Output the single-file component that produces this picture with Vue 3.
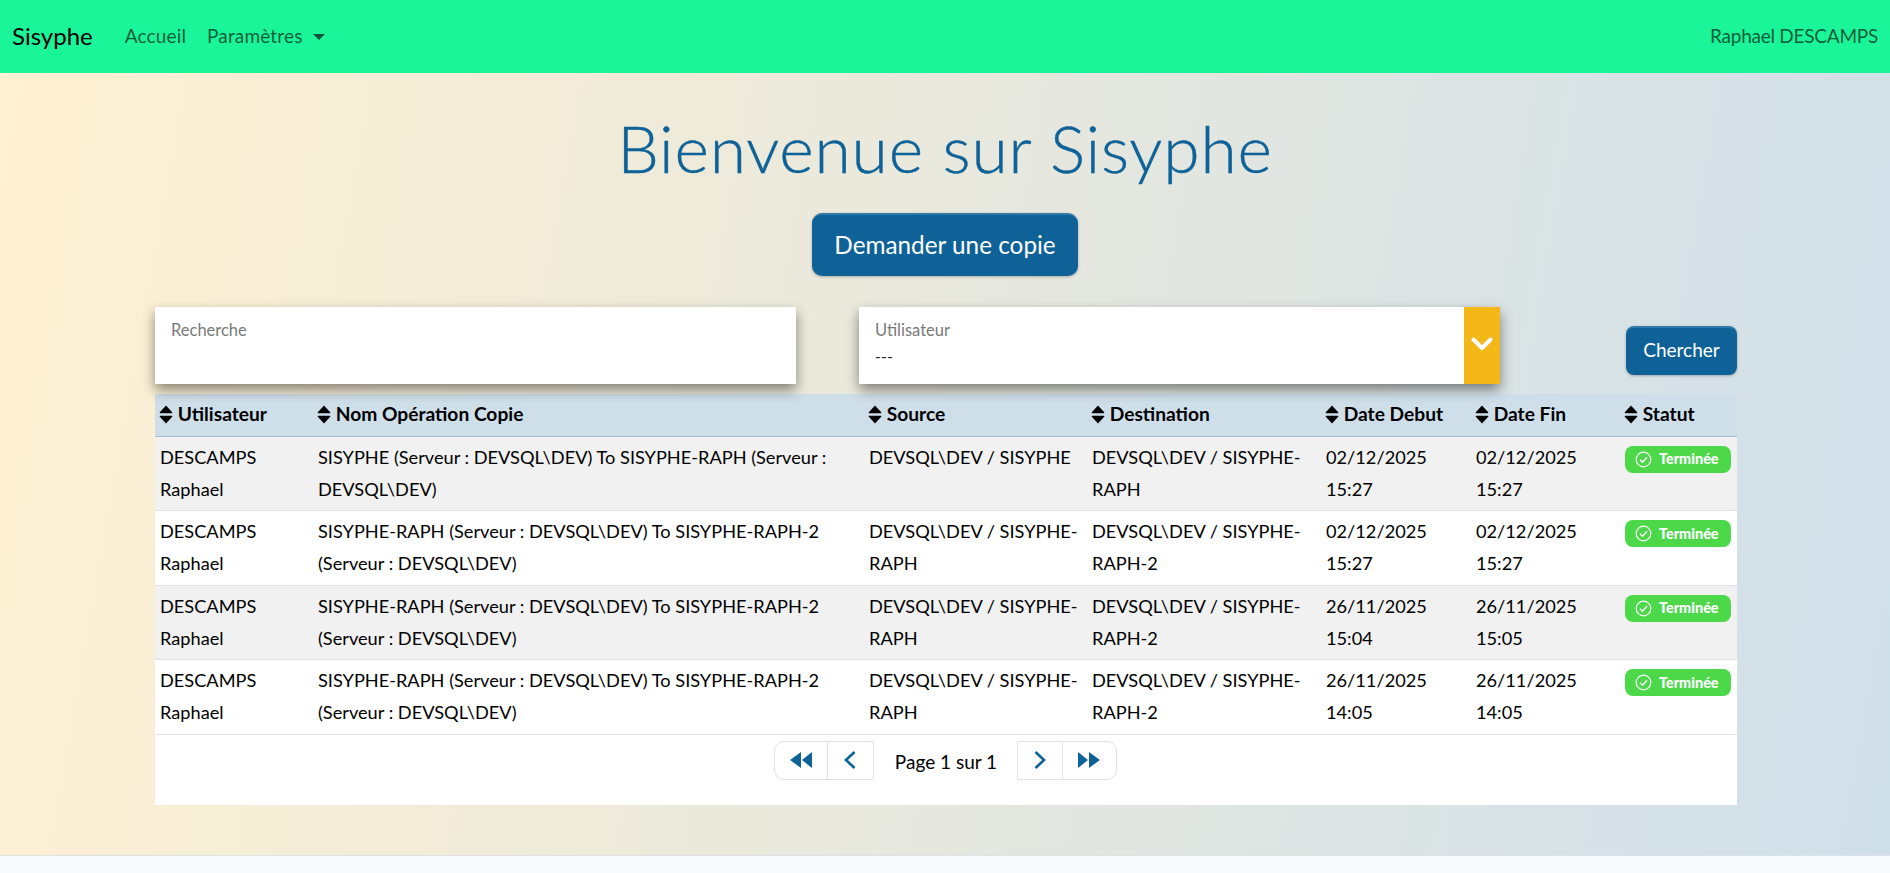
<template>
  <div class="page">
    <nav class="navbar">
      <a class="brand">Sisyphe</a>
      <a class="nav-link">Accueil</a>
      <a class="nav-link dropdown">Paramètres<span class="caret"></span></a>
      <span class="user-name">Raphael DESCAMPS</span>
    </nav>

    <main class="main">
      <h1 class="title">Bienvenue sur Sisyphe</h1>
      <div class="cta">
        <button class="btn btn-large">Demander une copie</button>
      </div>

      <div class="content">
        <div class="filters">
          <div class="field">
            <label class="field-label">Recherche</label>
          </div>
          <div class="field field-select">
            <div class="field-body">
              <label class="field-label">Utilisateur</label>
              <div class="field-value">---</div>
            </div>
            <div class="field-arrow">
              <svg width="22" height="14" viewBox="0 0 22 14">
                <path d="M2.5 2.5 L11 11 L19.5 2.5" fill="none" stroke="#fff" stroke-width="4" stroke-linecap="round" stroke-linejoin="round" />
              </svg>
            </div>
          </div>
          <button class="btn btn-search">Chercher</button>
        </div>

        <div class="panel">
          <table class="grid">
            <colgroup>
              <col v-for="c in columns" :key="c.label" :class="c.cls" />
            </colgroup>
            <thead>
              <tr>
                <th v-for="c in columns" :key="c.label">
                  <svg class="sort" width="14" height="19" viewBox="0 0 14 19">
                    <path d="M7 0.5 L13.2 7.2 Q13.6 8.2 12.6 8.2 L1.4 8.2 Q0.4 8.2 0.8 7.2 Z" fill="#000" />
                    <path d="M7 18.5 L13.2 11.8 Q13.6 10.8 12.6 10.8 L1.4 10.8 Q0.4 10.8 0.8 11.8 Z" fill="#000" />
                  </svg>
                  {{ c.label }}
                </th>
              </tr>
            </thead>
            <tbody>
              <tr v-for="(r, i) in rows" :key="i">
                <td>{{ r.user }}</td>
                <td>{{ r.name }}</td>
                <td>{{ r.source }}</td>
                <td>{{ r.dest }}</td>
                <td>{{ r.start }}</td>
                <td>{{ r.end }}</td>
                <td>
                  <span class="badge">
                    <svg width="17" height="17" viewBox="0 0 17 17">
                      <circle cx="8.5" cy="8.5" r="7.3" fill="none" stroke="#fff" stroke-width="1.2" />
                      <path d="M5 8.8 L7.5 11.2 L12 6.3" fill="none" stroke="#fff" stroke-width="1.4" />
                    </svg>
                    Terminée
                  </span>
                </td>
              </tr>
            </tbody>
          </table>

          <div class="pager">
            <div class="pager-group pager-left">
              <button class="pager-btn pager-btn-wide">
                <svg width="24" height="18" viewBox="0 0 24 18"><path d="M12 1 L1 9 L12 17 Z M23 1 L13 9 L23 17 Z" fill="#0f6297" /></svg>
              </button>
              <button class="pager-btn">
                <svg width="14" height="20" viewBox="0 0 14 20"><path d="M11.5 2 L3 10 L11.5 18" fill="none" stroke="#0f6297" stroke-width="2.6" /></svg>
              </button>
            </div>
            <span class="pager-text">Page 1 sur 1</span>
            <div class="pager-group pager-right">
              <button class="pager-btn">
                <svg width="14" height="20" viewBox="0 0 14 20"><path d="M2.5 2 L11 10 L2.5 18" fill="none" stroke="#0f6297" stroke-width="2.6" /></svg>
              </button>
              <button class="pager-btn pager-btn-wide">
                <svg width="24" height="18" viewBox="0 0 24 18"><path d="M1 1 L11 9 L1 17 Z M12 1 L23 9 L12 17 Z" fill="#0f6297" /></svg>
              </button>
            </div>
          </div>
        </div>
      </div>
    </main>

    <footer class="footer"></footer>
  </div>
</template>

<script setup>
const columns = [
  { label: "Utilisateur", cls: "c-user" },
  { label: "Nom Opération Copie", cls: "c-name" },
  { label: "Source", cls: "c-source" },
  { label: "Destination", cls: "c-dest" },
  { label: "Date Debut", cls: "c-start" },
  { label: "Date Fin", cls: "c-end" },
  { label: "Statut", cls: "c-status" },
];

const rows = [
  {
    user: "DESCAMPS Raphael",
    name: "SISYPHE (Serveur : DEVSQL\\DEV) To SISYPHE-RAPH (Serveur : DEVSQL\\DEV)",
    source: "DEVSQL\\DEV / SISYPHE",
    dest: "DEVSQL\\DEV / SISYPHE-RAPH",
    start: "02/12/2025 15:27",
    end: "02/12/2025 15:27",
  },
  {
    user: "DESCAMPS Raphael",
    name: "SISYPHE-RAPH (Serveur : DEVSQL\\DEV) To SISYPHE-RAPH-2 (Serveur : DEVSQL\\DEV)",
    source: "DEVSQL\\DEV / SISYPHE-RAPH",
    dest: "DEVSQL\\DEV / SISYPHE-RAPH-2",
    start: "02/12/2025 15:27",
    end: "02/12/2025 15:27",
  },
  {
    user: "DESCAMPS Raphael",
    name: "SISYPHE-RAPH (Serveur : DEVSQL\\DEV) To SISYPHE-RAPH-2 (Serveur : DEVSQL\\DEV)",
    source: "DEVSQL\\DEV / SISYPHE-RAPH",
    dest: "DEVSQL\\DEV / SISYPHE-RAPH-2",
    start: "26/11/2025 15:04",
    end: "26/11/2025 15:05",
  },
  {
    user: "DESCAMPS Raphael",
    name: "SISYPHE-RAPH (Serveur : DEVSQL\\DEV) To SISYPHE-RAPH-2 (Serveur : DEVSQL\\DEV)",
    source: "DEVSQL\\DEV / SISYPHE-RAPH",
    dest: "DEVSQL\\DEV / SISYPHE-RAPH-2",
    start: "26/11/2025 14:05",
    end: "26/11/2025 14:05",
  },
];
</script>

<style>
html,
body {
  margin: 0;
  background: #f8f9fa;
}
</style>

<style scoped>
.page {
  height: 873px;
  display: flex;
  flex-direction: column;
  font-family: "Lato", "Liberation Sans", sans-serif;
  color: #000;
  overflow: hidden;
}

.navbar {
  height: 73px;
  flex: none;
  display: flex;
  align-items: center;
  padding: 0 12px 3px;
  background: #19f598;
  box-sizing: border-box;
}

.brand {
  font-size: 24px;
  margin-right: 32px;
  color: #000;
}

.nav-link {
  font-size: 19px;
  letter-spacing: 0.15px;
  color: rgba(0, 0, 0, 0.65);
  margin-right: 21px;
}

.caret {
  display: inline-block;
  margin-left: 10px;
  vertical-align: 3px;
  border-top: 6px solid rgba(0, 0, 0, 0.65);
  border-left: 6px solid transparent;
  border-right: 6px solid transparent;
}

.user-name {
  margin-left: auto;
  font-size: 19px;
  letter-spacing: -0.25px;
  color: rgba(0, 0, 0, 0.65);
}

.main {
  flex: 1;
  background: linear-gradient(100deg, #fff1d2 0%, #cfdfea 100%);
}

.title {
  margin: 0;
  padding-top: 33px;
  text-align: center;
  font-size: 66px;
  letter-spacing: 0.8px;
  line-height: 84px;
  font-weight: 300;
  -webkit-text-stroke: 0.4px #0f6297;
  color: #0f6297;
}

.cta {
  display: flex;
  justify-content: center;
  margin-top: 23px;
}

.btn {
  border: none;
  border-top: 2px solid #2f7aa9;
  color: #fff;
  background: #0f6297;
  font-family: inherit;
  box-shadow: 0 1px 3px rgba(0, 0, 0, 0.25);
}

.btn-large {
  width: 266px;
  height: 63px;
  padding-bottom: 3px;
  border-radius: 10px;
  font-size: 24.3px;
}

.content {
  width: 1582px;
  margin: 31px 0 0 155px;
}

.filters {
  display: flex;
  align-items: flex-start;
  gap: 63px;
  height: 87px;
}

.panel {
  height: 411px;
  background: #fff;
}

.field {
  width: 641px;
  height: 77px;
  flex: none;
  display: flex;
  box-sizing: border-box;
  background: #fff;
  box-shadow: 0 6px 12px rgba(0, 0, 0, 0.45);
  padding: 13px 16px;
}

.field-select {
  padding: 0;
}

.field-body {
  flex: 1;
  padding: 13px 16px;
}

.field-label {
  display: block;
  font-size: 16.5px;
  color: #7a7a7a;
}

.field-value {
  margin-top: 6px;
  font-size: 16px;
  color: #222;
}

.field-arrow {
  width: 36px;
  background: #f3b718;
  display: flex;
  align-items: center;
  justify-content: center;
  padding-bottom: 4px;
  box-sizing: border-box;
}

.btn-search {
  width: 111px;
  height: 49px;
  border-radius: 8px;
  margin-left: auto;
  margin-top: 19px;
  padding-bottom: 5px;
  font-size: 19px;
}

.grid {
  width: 1582px;
  table-layout: fixed;
  border-collapse: collapse;
  font-size: 18.2px;
}

.c-user { width: 158px; }
.c-name { width: 551px; }
.c-source { width: 223px; }
.c-dest { width: 234px; }
.c-start { width: 150px; }
.c-end { width: 149px; }
.c-status { width: 117px; }

.grid th {
  height: 39px;
  padding: 0 5px 3px;
  text-align: left;
  font-size: 19.2px;
  font-weight: 700;
  background: #cfdfea;
  border-bottom: 1px solid #a9bcc9;
  white-space: nowrap;
}

.sort {
  margin-left: -1px;
  vertical-align: -3px;
}

.grid td {
  padding: 5px;
  vertical-align: top;
  line-height: 31.7px;
  border-bottom: 1px solid #e2e2e8;
}

.grid tbody tr:nth-child(odd) td {
  background: #f1f1f1;
}

.badge {
  display: inline-flex;
  align-items: center;
  gap: 7px;
  width: 106px;
  height: 27px;
  margin-top: 4px;
  padding-left: 10px;
  box-sizing: border-box;
  border-radius: 8px;
  background: #4dd84a;
  color: #fff;
  font-size: 14.4px;
  font-weight: 900;
  line-height: 1;
  vertical-align: top;
}

.pager {
  display: flex;
  justify-content: center;
  align-items: center;
  margin-top: 6px;
  padding-right: 2px;
}

.pager-group {
  display: flex;
  height: 39px;
  box-sizing: border-box;
  border: 1px solid #dfe1e8;
  background: #fff;
}

.pager-left {
  border-radius: 10px 0 0 10px;
}

.pager-right {
  border-radius: 0 10px 10px 0;
}

.pager-btn {
  width: 45px;
  padding: 0;
  border: none;
  background: transparent;
  display: flex;
  align-items: center;
  justify-content: center;
}

.pager-btn-wide {
  width: 53px;
}

.pager-btn:first-child {
  border-right: 1px solid #dfe1e8;
}

.pager-text {
  width: 143px;
  box-sizing: border-box;
  padding: 2px 0 0 2px;
  text-align: center;
  font-size: 19px;
}

.footer {
  height: 18px;
  flex: none;
  background: #f8f9fa;
  border-top: 1px solid #dee2e6;
  box-sizing: border-box;
}
</style>
